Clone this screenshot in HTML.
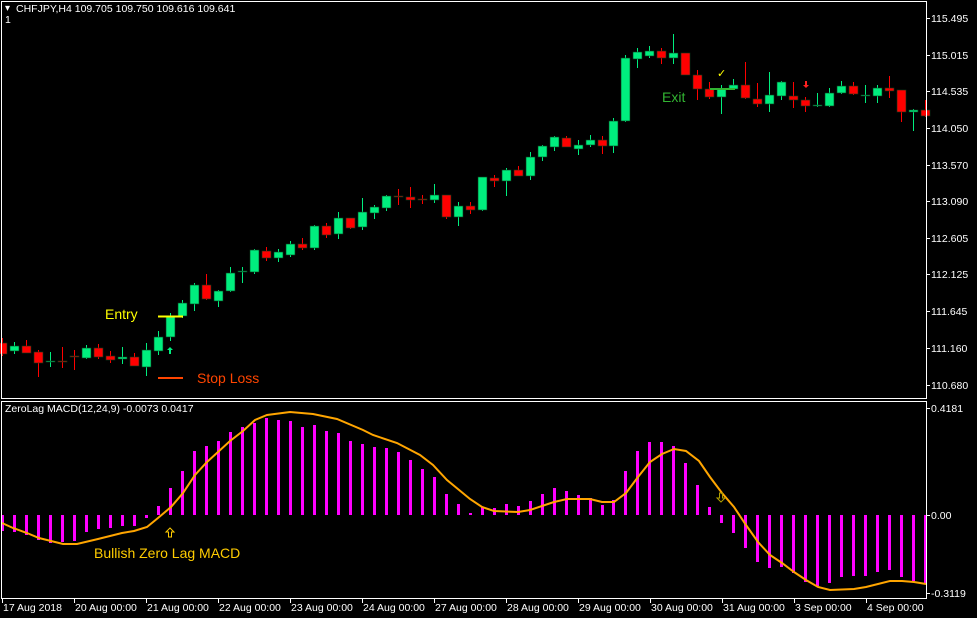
<!DOCTYPE html>
<html><head><meta charset="utf-8"><style>
html,body{margin:0;padding:0;background:#000;width:977px;height:618px;overflow:hidden}
svg{display:block}
text{font-family:"Liberation Sans",sans-serif}
</style></head><body>
<svg id="s" width="977" height="618" xmlns="http://www.w3.org/2000/svg">
<rect width="977" height="618" fill="#000"/>
<g id="cnd"></g>
<g id="mac"></g>
<polyline id="sig" fill="none" stroke="#ffa500" stroke-width="2" points=""/>
<!-- frames -->
<rect x="1.5" y="1.5" width="925" height="397" fill="none" stroke="#fff" stroke-width="1"/>
<rect x="1.5" y="401.5" width="925" height="197" fill="none" stroke="#fff" stroke-width="1"/>
<g fill="#fff" font-size="10.5">
<text x="5" y="11" font-size="10">▾</text>
<text x="16" y="12">CHFJPY,H4  109.705 109.750 109.616 109.641</text>
<text x="5" y="23">1</text>
<text x="5" y="412">ZeroLag MACD(12,24,9) -0.0073 0.0417</text>
<text x="931" y="22">115.495</text><text x="931" y="59">115.015</text><text x="931" y="95">114.535</text>
<text x="931" y="132">114.050</text><text x="931" y="169">113.570</text><text x="931" y="205">113.090</text>
<text x="931" y="242">112.605</text><text x="931" y="278">112.125</text><text x="931" y="315">111.645</text>
<text x="931" y="352">111.160</text><text x="931" y="389">110.680</text>
<text x="931" y="412">0.4181</text><text x="931" y="519">0.00</text><text x="931" y="597">-0.3119</text>
<text x="3" y="611">17 Aug 2018</text><text x="75" y="611">20 Aug 00:00</text><text x="147" y="611">21 Aug 00:00</text>
<text x="219" y="611">22 Aug 00:00</text><text x="291" y="611">23 Aug 00:00</text><text x="363" y="611">24 Aug 00:00</text>
<text x="435" y="611">27 Aug 00:00</text><text x="507" y="611">28 Aug 00:00</text><text x="579" y="611">29 Aug 00:00</text>
<text x="651" y="611">30 Aug 00:00</text><text x="723" y="611">31 Aug 00:00</text><text x="795" y="611">3 Sep 00:00</text>
<text x="867" y="611">4 Sep 00:00</text>
</g>
<g id="ticks" stroke="#fff"></g>
<!-- annotations -->
<text x="105" y="319" fill="#ffff00" font-size="14">Entry</text>
<line x1="158" y1="316.5" x2="183" y2="316.5" stroke="#ffff00" stroke-width="2"/>
<line x1="158" y1="378" x2="183" y2="378" stroke="#ff4500" stroke-width="2"/>
<text x="197" y="383" fill="#ff4500" font-size="14">Stop Loss</text>
<text x="662" y="102" fill="#32b432" font-size="14">Exit</text>
<line x1="710" y1="89" x2="735" y2="89" stroke="#32b432" stroke-width="2"/>
<text x="717" y="77" fill="#ffff00" font-size="11">✓</text>
<path d="M170 347 l-3 3 h2 v4 h2 v-4 h2 z" fill="#00ee7e"/>
<path d="M806 88 l-3 -3 h2 v-4 h2 v4 h2 z" fill="#ff2020"/>
<text x="94" y="558" fill="#ffcc00" font-size="14">Bullish Zero Lag MACD</text>
<path d="M170 528 l-4 4 h2.5 v5 h3 v-5 h2.5 z" fill="none" stroke="#ffcc00" stroke-width="1"/>
<path d="M721 502 l-4 -4 h2.5 v-5 h3 v5 h2.5 z" fill="none" stroke="#b0a000" stroke-width="1"/>
</svg>
<script>
var NS="http://www.w3.org/2000/svg";
function el(p,t,a){var e=document.createElementNS(NS,t);for(var k in a)e.setAttribute(k,a[k]);p.appendChild(e);return e;}
var X=function(i){return 2+11.99*i;};
// [g/r, bodyTop, bodyBot, wickTop, wickBot]
var C=[
['r',343,354,338,356],['g',346,351,342,354],['r',346,353,340,353],['r',352,363,350,377],['g',361,362,352,367],
['r',361,362,347,368],['r',356,357,350,370],['g',348,358,345,359],['r',348,357,344,359],['r',356,360,351,363],
['g',357,359,347,364],['r',357,366,353,366],['g',350,367,343,376],['g',337,351,331,355],['g',317,337,313,341],
['g',303,316,300,318],['g',285,304,283,311],['r',285,299,274,300],['g',291,301,290,307],['g',273,291,267,292],
['g',271,272,267,283],['g',250,272,249,274],['r',251,258,247,261],['g',252,258,249,262],['g',244,255,241,257],
['r',244,248,238,250],['g',226,248,225,250],['r',226,235,223,238],['g',218,234,212,239],['r',218,228,218,229],
['g',212,227,198,230],['g',207,213,205,219],['g',196,208,195,211],['r',196,197,189,205],['r',197,200,187,208],
['r',199,200,195,204],['g',195,200,184,203],['r',195,217,195,219],['g',206,217,202,226],['r',206,210,202,214],
['g',177,210,177,211],['r',178,181,175,187],['g',170,181,168,196],['r',170,176,166,176],['g',157,176,152,180],
['g',146,157,145,161],['g',137,147,136,151],['r',138,147,136,147],['g',145,149,140,155],['g',140,145,135,147],
['r',140,146,136,154],['g',121,146,118,153],['g',58,121,55,122],['g',52,59,48,68],['g',51,56,46,58],
['r',51,58,48,64],['g',53,58,34,64],['r',53,75,53,75],['r',75,89,70,100],['r',89,97,82,99],
['g',89,97,85,114],['g',85,89,79,90],['r',85,98,62,99],['r',99,104,83,107],['g',95,104,72,112],
['g',82,96,81,100],['r',96,100,82,108],['r',100,106,97,112],['g',105,106,93,107],['g',93,106,88,107],
['g',86,93,81,94],['r',86,94,82,95],['g',95,96,85,103],['g',88,96,85,103],['r',88,91,76,98],
['r',90,112,90,122],['g',110,112,109,131],['r',110,116,100,117]];
var cg=document.getElementById('cnd');
C.forEach(function(c,i){var x=Math.round(X(i))+0.5;var col=c[0]=='g'?'#00ee7e':'#ff0000';
el(cg,'line',{x1:x,x2:x,y1:c[3],y2:c[4],stroke:col,'stroke-width':1});
var h=Math.max(1,c[2]-c[1]);
el(cg,'rect',{x:x-4.5,y:c[1],width:9,height:h,fill:col,stroke:'#0a3a1a','stroke-width':0.6});});
// MACD histogram y tops/bottoms
var M=[531,532,535,540,543,542,541,532,529,528,526,526,518,506,488,471,451,446,441,432,427,423,418,420,421,427,425,431,433,441,444,447,448,452,460,469,477,494,504,513,
507,508,504,506,501,494,488,491,495,498,505,500,471,451,442,442,446,463,485,507,523,533,548,562,568,567,573,582,586,583,577,576,576,572,570,577,581,584];
var mg=document.getElementById('mac');
M.forEach(function(v,i){var x=Math.round(X(i))-1;var y1=Math.min(v,515),y2=Math.max(v,515);
el(mg,'rect',{x:x,y:y1,width:3,height:Math.max(1,y2-y1),fill:'#ff00ff'});});
var P=[[2,523],[13,528],[27,533],[39,538],[63,544],[77,544],[98,539],[122,533],[134,531],[147,527],[158,518],[171,507],[183,493],[195,475],[207,462],[218,452],[230,441],[243,431],[255,420],[267,415],[290,412],[313,414],[337,419],[363,430],[373,435],[397,443],[420,455],[433,465],[447,480],[470,499],[482,507],[494,511],[518,512],[530,510],[554,502],[567,499],[590,499],[602,502],[614,502],[626,493],[638,477],[650,462],[662,454],[674,449],[686,451],[699,461],[710,477],[722,493],[734,507],[746,525],[758,542],[770,555],[782,563],[794,572],[806,580],[818,587],[830,590],[854,589],[866,587],[878,584],[890,581],[902,581],[914,582],[926,584]];
document.getElementById('sig').setAttribute('points',P.map(function(p){return p.join(',')}).join(' '));
var tg=document.getElementById('ticks');
[18,55,91,128,165,201,238,274,311,348,385,408,515,593].forEach(function(y){el(tg,'line',{x1:927,x2:930,y1:y+0.5,y2:y+0.5});});
[2,74,146,218,290,362,434,506,578,650,722,794,866].forEach(function(x){el(tg,'line',{x1:x+0.5,x2:x+0.5,y1:599,y2:603});});
</script>
</body></html>
